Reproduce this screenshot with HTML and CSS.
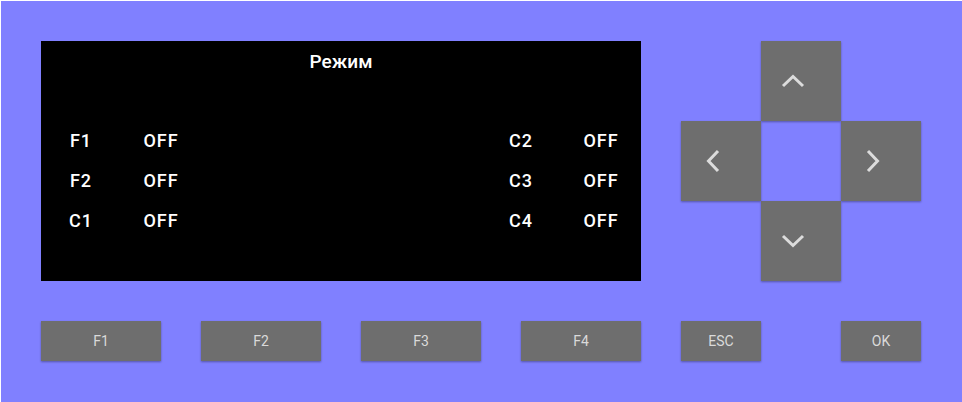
FILE: index.html
```html
<!DOCTYPE html>
<html lang="ru">
<head>
<meta charset="utf-8">
<title>Panel</title>
<link rel="stylesheet" href="styles.css">
</head>
<body>
<div class="panel">
  <div class="top">
    <div class="screen">
      <div class="title">Режим</div>
      <div class="rows">
        <div class="row">
          <div class="pair"><span class="cell">F1</span><span class="cell">OFF</span></div>
          <div class="pair"><span class="cell">C2</span><span class="cell">OFF</span></div>
        </div>
        <div class="row">
          <div class="pair"><span class="cell">F2</span><span class="cell">OFF</span></div>
          <div class="pair"><span class="cell">C3</span><span class="cell">OFF</span></div>
        </div>
        <div class="row">
          <div class="pair"><span class="cell">C1</span><span class="cell">OFF</span></div>
          <div class="pair"><span class="cell">C4</span><span class="cell">OFF</span></div>
        </div>
      </div>
    </div>
    <div class="dpad">
      <div class="key arrow up"><svg width="24" height="14" viewBox="0 0 24 14"><polyline points="2,12 12,2.5 22,12" fill="none" stroke="#dcdcdc" stroke-width="3"/></svg></div>
      <div class="key arrow left"><svg width="14" height="24" viewBox="0 0 14 24"><polyline points="12,2 2.5,12 12,22" fill="none" stroke="#dcdcdc" stroke-width="3"/></svg></div>
      <div class="key arrow right"><svg width="14" height="24" viewBox="0 0 14 24"><polyline points="2,2 11.5,12 2,22" fill="none" stroke="#dcdcdc" stroke-width="3"/></svg></div>
      <div class="key arrow down"><svg width="24" height="14" viewBox="0 0 24 14"><polyline points="2,2 12,11.5 22,2" fill="none" stroke="#dcdcdc" stroke-width="3"/></svg></div>
    </div>
  </div>
  <div class="bottom">
    <div class="key fkey">F1</div>
    <div class="key fkey">F2</div>
    <div class="key fkey">F3</div>
    <div class="key fkey">F4</div>
    <div class="key skey">ESC</div>
    <div class="key skey ok">OK</div>
  </div>
</div>
</body>
</html>
```
FILE: styles.css
```css
html, body {
  margin: 0;
  padding: 0;
  background: #ffffff;
}
body {
  padding: 1px 0 0 1px;
  overflow: hidden;
  font-family: Roboto, "Noto Sans", sans-serif;
}
.panel {
  width: 961px;
  height: 401px;
  box-sizing: border-box;
  padding: 40px;
  background: #8080ff;
  display: flex;
  flex-direction: column;
  gap: 40px;
}
.top {
  display: flex;
  gap: 40px;
  height: 240px;
}
.screen {
  width: 600px;
  height: 240px;
  background: #000;
  color: #fff;
  display: flex;
  flex-direction: column;
}
.title {
  height: 40px;
  display: flex;
  align-items: center;
  justify-content: center;
  font-size: 19px;
  font-weight: 500;
}
.rows {
  padding-top: 40px;
  display: flex;
  flex-direction: column;
}
.row {
  height: 40px;
  display: flex;
  justify-content: space-between;
  align-items: center;
}
.pair {
  display: flex;
}
.cell {
  width: 80px;
  text-align: center;
  font-size: 18px;
  font-weight: 500;
  letter-spacing: 1px;
  line-height: 38px;
}
.key {
  background: #6e6e6e;
  box-shadow: 0 1px 2px rgba(0, 0, 0, 0.35);
  color: #dadada;
  display: flex;
  align-items: center;
  justify-content: center;
}
.dpad {
  display: grid;
  grid-template-columns: repeat(3, 80px);
  grid-template-rows: repeat(3, 80px);
}
.arrow {
  padding-right: 17px;
}
.up { grid-column: 2; grid-row: 1; }
.left { grid-column: 1; grid-row: 2; }
.right { grid-column: 3; grid-row: 2; }
.down { grid-column: 2; grid-row: 3; }
.bottom {
  display: flex;
  gap: 40px;
  height: 40px;
}
.fkey {
  width: 120px;
  font-size: 14px;
}
.skey {
  width: 80px;
  font-size: 14px;
}
.ok {
  margin-left: 40px;
}
```
